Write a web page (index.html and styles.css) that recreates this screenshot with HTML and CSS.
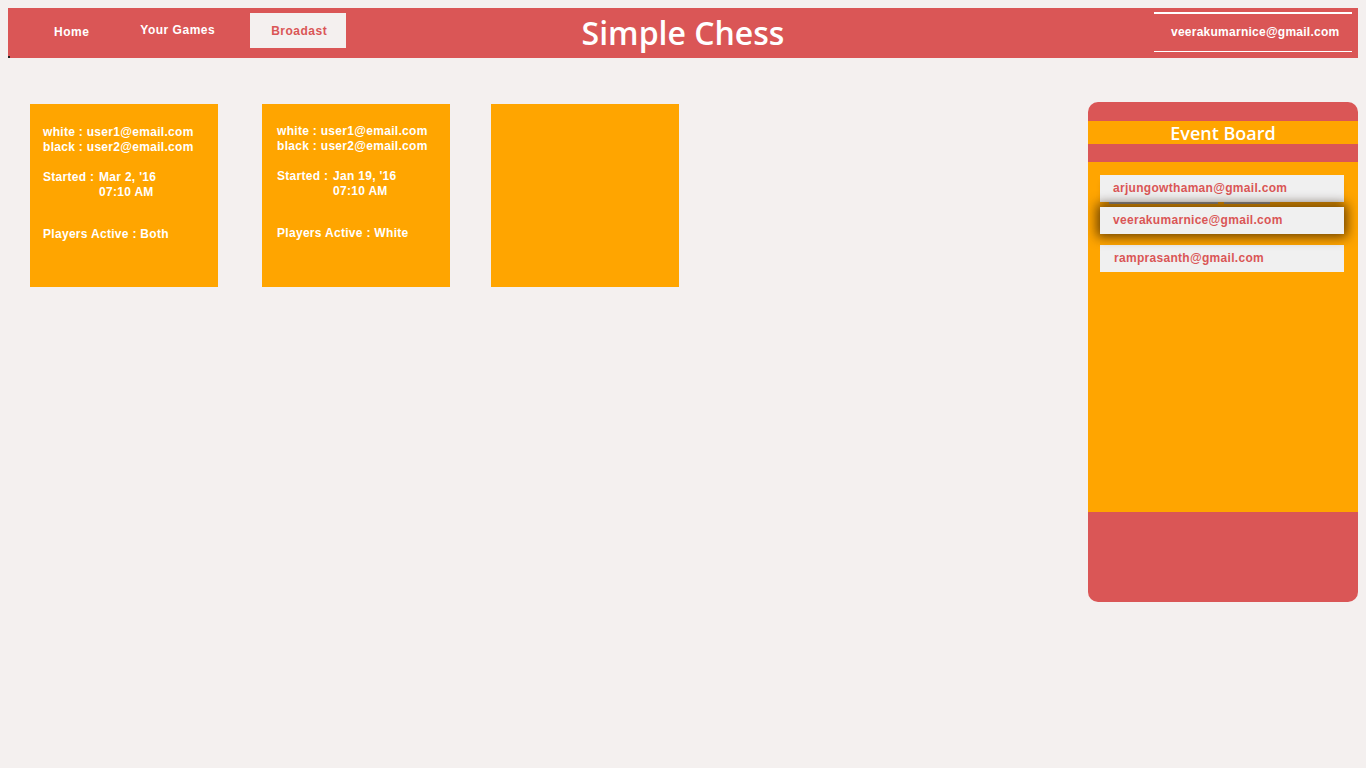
FILE: index.html
```html
<!DOCTYPE html>
<html>
<head>
<meta charset="utf-8">
<title>Simple Chess</title>
<link rel="stylesheet" href="styles.css">
</head>
<body>
<header class="topbar">
  <nav class="nav">
    <a class="nav-link">Home</a>
    <a class="nav-link nav-games">Your Games</a>
    <a class="nav-link nav-active">Broadast</a>
  </nav>
  <h1 class="title">Simple Chess</h1>
  <div class="user-wrap">
    <div class="user">veerakumarnice@gmail.com</div>
  </div>
</header>
<main class="main">
  <section class="games">
    <div class="card card-one">
      <p>white : user1@email.com<br>black : user2@email.com</p>
      <p class="started">Started : <span class="when">Mar 2, '16<br>07:10 AM</span></p>
      <p class="active">Players Active : Both</p>
    </div>
    <div class="card card-two">
      <p>white : user1@email.com<br>black : user2@email.com</p>
      <p class="started">Started : <span class="when">Jan 19, '16<br>07:10 AM</span></p>
      <p class="active">Players Active : White</p>
    </div>
    <div class="card card-three"></div>
  </section>
  <aside class="board">
    <div class="board-top"></div>
    <div class="board-title">Event Board</div>
    <div class="board-sep"></div>
    <ul class="board-list">
      <li class="item item-first">arjungowthaman@gmail.com</li>
      <li class="item item-hl">veerakumarnice@gmail.com</li>
      <li class="item item-last">ramprasanth@gmail.com</li>
    </ul>
    <div class="board-foot"></div>
  </aside>
</main>
</body>
</html>
```

FILE: styles.css
```css
html, body {
  background: #f4f0ef;
}
body {
  margin: 8px;
  font-family: "Liberation Sans", Arial, sans-serif;
}
.topbar {
  height: 50px;
  background: #da5656;
  display: grid;
  grid-template-columns: 1fr auto 1fr;
  align-items: start;
  position: relative;
}
.topbar::before {
  content: "";
  position: absolute;
  left: 0;
  bottom: 0;
  width: 2px;
  height: 2px;
  background: #222;
}
.nav {
  display: flex;
  padding-left: 25px;
  margin-top: 5px;
}
.nav-link {
  display: block;
  height: 35px;
  line-height: 36px;
  padding: 0 21px;
  color: #fff;
  font-weight: bold;
  font-size: 12px;
  letter-spacing: 0.5px;
}
.nav-link:first-child {
  line-height: 38px;
}
.nav-games {
  margin-left: 9px;
  line-height: 34px;
}
.nav-active {
  margin-left: 14px;
  background: #f4f0ef;
  color: #da5656;
  padding: 0 19px 0 21px;
}
.title {
  margin: 0;
  font-family: "Open Sans", sans-serif;
  font-weight: 600;
  font-size: 32px;
  line-height: 50px;
  color: #fff;
  letter-spacing: 0;
}
.user-wrap {
  display: flex;
  justify-content: flex-end;
  padding-right: 6px;
  padding-top: 4px;
}
.user {
  width: 198px;
  height: 40px;
  box-sizing: border-box;
  border-top: 2px solid #fff;
  border-bottom: 1px solid #fff;
  padding-left: 17px;
  line-height: 37px;
  color: #fff;
  font-weight: bold;
  font-size: 12px;
  letter-spacing: 0.25px;
}
.main {
  display: flex;
  justify-content: space-between;
  align-items: flex-start;
}
.games {
  display: flex;
  padding-left: 22px;
  margin-top: 46px;
}
.card {
  width: 188px;
  height: 183px;
  box-sizing: border-box;
  background: #ffa500;
  color: #fff;
  font-weight: bold;
  font-size: 12px;
  line-height: 15px;
  letter-spacing: 0.3px;
  padding: 21px 13px 0;
}
.card p {
  margin: 0;
}
.card .started {
  margin-top: 15px;
}
.card .when {
  display: inline-block;
  vertical-align: top;
  margin-left: 1px;
}
.card .active {
  margin-top: 27px;
}
.card-two {
  margin-left: 44px;
  padding: 20px 15px 0;
}
.card-three {
  margin-left: 41px;
}
.board {
  width: 270px;
  height: 500px;
  margin-top: 44px;
  border-radius: 10px;
  overflow: hidden;
  background: #da5656;
  display: flex;
  flex-direction: column;
}
.board-top {
  height: 19px;
}
.board-title {
  height: 23px;
  background: #ffa500;
  color: #fff;
  font-family: "Open Sans", sans-serif;
  font-weight: 600;
  font-size: 18px;
  line-height: 25px;
  text-align: center;
}
.board-sep {
  height: 18px;
}
.board-list {
  list-style: none;
  margin: 0;
  height: 350px;
  box-sizing: border-box;
  padding: 13px 14px 0 12px;
  background: #ffa500;
}
.item {
  height: 27px;
  line-height: 27px;
  background: #f0f0f0;
  color: #da5656;
  font-weight: bold;
  font-size: 12px;
  letter-spacing: 0.3px;
  padding-left: 13px;
  position: relative;
}
.item-first {
  box-shadow: 0 4px 6px -3px rgba(0, 0, 0, 0.25);
}
.item-first::after {
  content: "";
  position: absolute;
  top: 27px;
  left: 9px;
  width: 161px;
  height: 2px;
  background: linear-gradient(to right, #8a8a8a 0, #8a8a8a 109px, transparent 109px, transparent 115px, #8a8a8a 115px, #8a8a8a 161px);
}
.item-hl {
  margin-top: 5px;
  box-shadow: 0 0 12px 3px rgba(40, 20, 0, 0.7);
  z-index: 1;
}
.item-last {
  margin-top: 11px;
  padding-left: 14px;
}
.board-foot {
  flex: 1;
}
```
